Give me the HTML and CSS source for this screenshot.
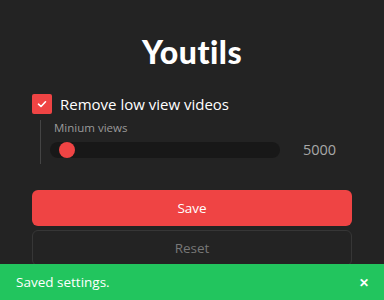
FILE: index.html
```html
<!DOCTYPE html>
<html lang="en">
  <head>
    <meta charset="utf-8">
    <title>Youtils</title>
    <link rel="stylesheet" href="styles.css">
  </head>
  <body>
    <div class="main">
      <h1 class="title">Youtils</h1>

      <label class="check-row">
        <span class="check-box">
          <svg width="12" height="12" viewBox="0 0 12 12"><polyline points="2.5,6.2 5,8.5 9.5,3.8" fill="none" stroke="#fff" stroke-width="1.6" stroke-linecap="round" stroke-linejoin="round"/></svg>
        </span>
        <span class="check-text">Remove low view videos</span>
      </label>

      <div class="sub">
        <div class="sub-label">Minium views</div>
        <div class="slider-row">
          <div class="track"><span class="thumb"></span></div>
          <span class="slider-value">5000</span>
        </div>
      </div>

      <button class="btn btn-save">Save</button>
      <button class="btn btn-reset">Reset</button>
    </div>

    <div class="toast">
      <span>Saved settings.</span>
      <span class="toast-close">&#x2715;</span>
    </div>
  </body>
</html>
```

FILE: styles.css
```css
body{
  margin:0;
  background-color:#232323;
  font-family:"Open Sans","Noto Sans",sans-serif;
  color:#fff;
  height:300px;
  overflow:hidden;
}
.main{ padding:0 32px; }
.title{
  margin:32px 0 0;
  text-align:center;
  font-family:Lato,"Open Sans",sans-serif;
  font-weight:900;
  font-size:32px;
  line-height:40px;
  letter-spacing:0.5px;
}
.check-row{
  display:flex;
  align-items:center;
  margin-top:22px;
  height:20px;
}
.check-box{
  width:20px;
  height:20px;
  border-radius:2px;
  background-color:#ef4444;
  display:flex;
  align-items:center;
  justify-content:center;
}
.check-text{
  margin-left:8px;
  font-size:15px;
  line-height:20px;
}
.sub{
  margin:6px 0 0 8px;
  border-left:1px solid #444;
  padding:0 0 5px 9px;
}
.sub-label{
  padding-left:4px;
  font-size:11.5px;
  line-height:16px;
  color:#9a9a9a;
}
.slider-row{
  display:flex;
  align-items:center;
  margin-top:4px;
}
.track{
  position:relative;
  width:230px;
  height:16px;
  border-radius:8px;
  background-color:#181818;
}
.thumb{
  position:absolute;
  left:9px;
  top:0;
  width:16px;
  height:16px;
  border-radius:50%;
  background-color:#ef4444;
}
.slider-value{
  margin-left:23px;
  font-size:14.5px;
  color:#a8a8a8;
}
.btn{
  display:block;
  width:100%;
  height:36px;
  border-radius:6px;
  font-family:inherit;
  font-size:13.5px;
  cursor:pointer;
}
.btn-save{
  margin-top:26px;
  border:0;
  background-color:#ef4444;
  color:#fff;
}
.btn-reset{
  margin-top:4px;
  border:1px solid #363636;
  background-color:transparent;
  color:#777;
}
.toast{
  position:fixed;
  left:0;
  right:0;
  bottom:0;
  height:36px;
  padding:0 16px;
  display:flex;
  align-items:center;
  justify-content:space-between;
  background-color:#22c55e;
  font-size:13.5px;
}
.toast-close{
  font-size:12px;
  font-weight:700;
  margin-right:-1px;
}
```
